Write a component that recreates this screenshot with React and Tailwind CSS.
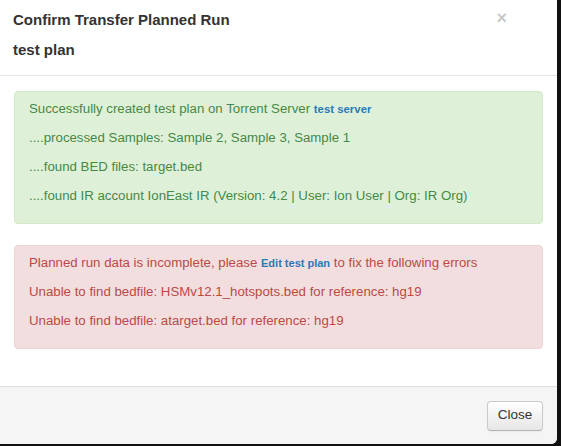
import React from 'react';

const font = { fontFamily: '"Liberation Sans", Arial, sans-serif' };

const App = () => {
  return (
    <div className="w-[561px] h-[446px] bg-[#111] overflow-hidden" style={font}>
      <div className="w-[557px] h-[444px] bg-white rounded-br-md flex flex-col">
        <div className="relative h-[76px] border-b border-[#e5e5e5] px-[13px] pt-[10px]">
          <h3 className="text-[15px] leading-[20px] font-bold text-[#333]">Confirm Transfer Planned Run</h3>
          <h4 className="mt-[10px] text-[15px] leading-[20px] font-bold text-[#333]">test plan</h4>
          <button className="absolute right-[50px] top-[8px] text-[18px] leading-[20px] font-bold text-[#c8c8c8]">×</button>
        </div>
        <div className="flex-1 px-[14px] pt-[15px] flex flex-col gap-[21px]">
          <div className="bg-[#dff0d8] border border-[#d6e9c6] rounded-[4px] px-[14px] pt-[7px] pb-[8px] text-[#468847] text-[13.25px] leading-[20px]">
            <p className="mb-[9px]">
              Successfully created test plan on Torrent Server{' '}
              <a className="text-[11.4px] font-bold text-[#2a7ab8]">test server</a>
            </p>
            <p className="mb-[9px]">....processed Samples: Sample 2, Sample 3, Sample 1</p>
            <p className="mb-[9px]">....found BED files: target.bed</p>
            <p className="mb-[9px]">....found IR account IonEast IR (Version: 4.2 | User: Ion User | Org: IR Org)</p>
          </div>
          <div className="bg-[#f2dede] border border-[#eed3d7] rounded-[4px] px-[14px] pt-[7px] pb-[8px] text-[#b94a48] text-[13.25px] leading-[20px]">
            <p className="mb-[9px]">
              Planned run data is incomplete, please{' '}
              <a className="text-[11px] font-bold text-[#2a7ab8]">Edit test plan</a> to fix the following errors
            </p>
            <p className="mb-[9px]">Unable to find bedfile: HSMv12.1_hotspots.bed for reference: hg19</p>
            <p className="mb-[9px]">Unable to find bedfile: atarget.bed for reference: hg19</p>
          </div>
        </div>
        <div className="h-[58px] border-t border-[#ddd] bg-[#f5f5f5] rounded-br-md flex items-center justify-end px-[14px]">
          <button className="w-[56px] h-[30px] text-[13.5px] text-[#333] border border-[#ccc] border-b-[#b3b3b3] rounded-[4px] bg-gradient-to-b from-white to-[#e6e6e6] shadow-[inset_0_1px_0_rgba(255,255,255,0.2),0_1px_2px_rgba(0,0,0,0.05)]">
            Close
          </button>
        </div>
      </div>
    </div>
  );
};

export default App;
